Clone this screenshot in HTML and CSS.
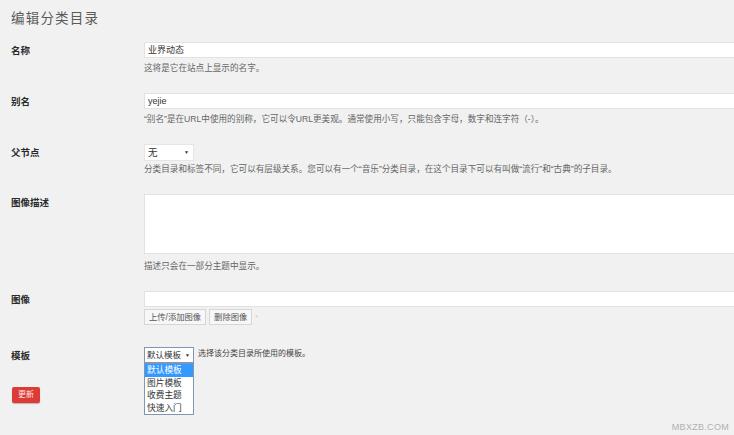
FILE: index.html
```
<!DOCTYPE html>
<html lang="zh-CN">
<head>
    <meta charset="UTF-8">
    <title>编辑分类目录</title>
    <link rel="stylesheet" href="styles.css">
</head>
<body>
    <div class="wrap">
        <h1>编辑分类目录</h1>

        <div class="form-table">
            <!-- 名称 -->
            <div class="row">
                <div class="label">名称</div>
                <div class="field">
                    <div class="text-input">业界动态</div>
                    <p class="desc">这将是它在站点上显示的名字。</p>
                </div>
            </div>

            <!-- 别名 -->
            <div class="row">
                <div class="label">别名</div>
                <div class="field">
                    <div class="text-input">yejie</div>
                    <p class="desc">“别名”是在URL中使用的别称，它可以令URL更美观。通常使用小写，只能包含字母，数字和连字符（-）。</p>
                </div>
            </div>

            <!-- 父节点 -->
            <div class="row">
                <div class="label">父节点</div>
                <div class="field">
                    <div class="select">无<span class="arrow">▼</span></div>
                    <p class="desc desc-tight">分类目录和标签不同，它可以有层级关系。您可以有一个“音乐”分类目录，在这个目录下可以有叫做“流行”和“古典”的子目录。</p>
                </div>
            </div>

            <!-- 图像描述 -->
            <div class="row">
                <div class="label">图像描述</div>
                <div class="field">
                    <div class="textarea"></div>
                    <p class="desc desc-loose">描述只会在一部分主题中显示。</p>
                </div>
            </div>

            <!-- 图像 -->
            <div class="row">
                <div class="label">图像</div>
                <div class="field">
                    <div class="text-input"></div>
                    <div class="buttons">
                        <span class="btn">上传/添加图像</span>
                        <span class="btn">删除图像</span>
                        <span class="mark">*</span>
                    </div>
                </div>
            </div>

            <!-- 模板 -->
            <div class="row row-template">
                <div class="label">模板</div>
                <div class="field field-inline">
                    <div class="select select-open">默认模板<span class="arrow">▼</span>
                        <ul class="dropdown">
                            <li class="active">默认模板</li>
                            <li>图片模板</li>
                            <li>收费主题</li>
                            <li>快速入门</li>
                        </ul>
                    </div>
                    <span class="desc-inline">选择该分类目录所使用的模板。</span>
                </div>
            </div>
        </div>

        <span class="btn-primary">更新</span>
    </div>

    <div class="watermark">MBXZB.COM</div>
</body>
</html>
```

FILE: styles.css
```
/* 编辑分类目录 */
body {
    margin: 0;
    background: #f1f1f1;
    color: #333;
    font-family: "Liberation Sans", "Noto Sans CJK SC", sans-serif;
    overflow: hidden;
    height: 435px;
    position: relative;
}

.wrap {
    padding-left: 11px;
}

h1 {
    margin: 0;
    padding-top: 9px;
    font-size: 13.5px;
    line-height: 20px;
    font-weight: normal;
    letter-spacing: 1.2px;
    color: #5a5a5a;
}

.form-table {
    margin-top: 4px;
}

.row {
    display: grid;
    grid-template-columns: 133px 1fr;
    padding: 9px 0;
}

.row-template {
    padding-top: 13px;
}

.label {
    padding-top: 4px;
    font-size: 9.5px;
    line-height: 10px;
    font-weight: bold;
    color: #2a2a2a;
}

.field {
    min-width: 0;
}

.text-input {
    box-sizing: border-box;
    width: 620px;
    height: 16px;
    background: #fff;
    border: 1px solid #e2e2e2;
    padding: 0 3px;
    font-size: 9px;
    line-height: 14px;
    color: #333;
}

.desc {
    margin: 4px 0 0;
    font-size: 8.6px;
    line-height: 13px;
    color: #666;
    white-space: nowrap;
}

.desc-tight {
    margin-top: 2px;
}

.desc-loose {
    margin-top: 6px;
}

.select {
    position: relative;
    box-sizing: border-box;
    width: 50px;
    height: 17px;
    background: #fff;
    border: 1px solid #e6e6e6;
    padding: 0 3px;
    font-size: 9.5px;
    line-height: 15px;
    color: #333;
}

.arrow {
    position: absolute;
    right: 4px;
    top: 0;
    font-size: 5px;
    color: #333;
}

.textarea {
    box-sizing: border-box;
    width: 620px;
    height: 60px;
    background: #fff;
    border: 1px solid #e2e2e2;
}

.buttons {
    display: flex;
    align-items: center;
    gap: 3px;
    margin-top: 2px;
}

.btn {
    box-sizing: border-box;
    height: 16px;
    padding: 0 4px;
    background: #f7f7f7;
    border: 1px solid #d6d6d6;
    font-size: 8.3px;
    line-height: 14px;
    color: #555;
}

.mark {
    font-size: 7px;
    color: #ccc;
}

.field-inline {
    display: flex;
    align-items: flex-start;
    gap: 4px;
}

.select-open {
    height: 16px;
    border-color: #8096b5;
    padding: 0 2px;
    font-size: 8.5px;
    line-height: 14px;
}

.select-open .arrow {
    right: 3px;
}

.dropdown {
    position: absolute;
    left: -1px;
    top: 15px;
    width: 50px;
    box-sizing: border-box;
    margin: 0;
    padding: 0;
    list-style: none;
    background: #fff;
    border: 1px solid #8096b5;
}

.dropdown li {
    height: 12.5px;
    padding: 0 2px;
    font-size: 8.7px;
    line-height: 12.5px;
    color: #333;
}

.dropdown li.active {
    background: #3399ff;
    color: #fff;
}

.desc-inline {
    font-size: 8px;
    line-height: 14px;
    color: #444;
}

.btn-primary {
    display: inline-block;
    margin-top: 15px;
    margin-left: 1px;
    width: 28px;
    height: 16px;
    border-radius: 2px;
    background: #dd3b36;
    box-shadow: 0 1px 1px rgba(0, 0, 0, 0.25);
    text-align: center;
    font-size: 8px;
    line-height: 16px;
    color: #fde6e6;
}

.watermark {
    position: absolute;
    right: 5px;
    bottom: 3px;
    font-size: 9px;
    letter-spacing: 0.3px;
    color: #b0b0b0;
}
```
